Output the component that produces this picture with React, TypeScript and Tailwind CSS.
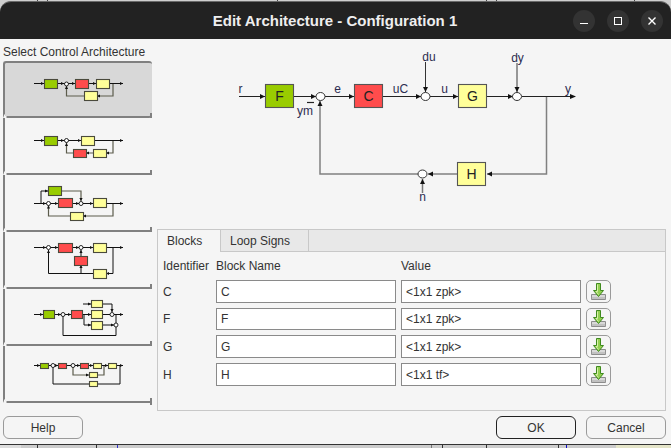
import React from "react";

const GREEN = "#99cc00";
const RED = "#ff4c4c";
const YEL = "#ffff99";

type B = [number, number, number, number, string];
type S = [number, number];
type L = string;

function Thumb({ top, blocks, sums, wires, gray, arrows }: { top: number; blocks: B[]; sums: S[]; wires: L[]; gray?: L[]; arrows: [number, number, "r" | "l" | "u" | "d"][] }) {
  return (
    <svg className="block" width="147" height="55" viewBox={`5 ${top} 147 55`}>
      {(gray ?? []).map((d, i) => (
        <path key={i} d={d} fill="none" stroke="#5c5c4c" strokeWidth="1.2" />
      ))}
      {wires.map((d, i) => (
        <path key={i} d={d} fill="none" stroke="#111" strokeWidth="1" />
      ))}
      {arrows.map(([x, y, dir], i) => {
        const p =
          dir === "r"
            ? `${x},${y} ${x - 3},${y - 1.6} ${x - 3},${y + 1.6}`
            : dir === "l"
              ? `${x},${y} ${x + 3},${y - 1.6} ${x + 3},${y + 1.6}`
              : dir === "u"
                ? `${x},${y} ${x - 1.6},${y + 3} ${x + 1.6},${y + 3}`
                : `${x},${y} ${x - 1.6},${y - 3} ${x + 1.6},${y - 3}`;
        return <polygon key={i} points={p} fill="#111" />;
      })}
      {blocks.map(([x, y, w, h, c], i) => (
        <rect key={i} x={x + 0.5} y={y + 0.5} width={w} height={h} fill={c} stroke="#4a4a3c" strokeWidth="1.1" />
      ))}
      {sums.map(([x, y], i) => (
        <circle key={i} cx={x} cy={y} r="2" fill="#fff" stroke="#111" strokeWidth="0.9" />
      ))}
    </svg>
  );
}

const thumbs = [
  {
    top: 63,
    blocks: [[44, 79, 13, 9, GREEN], [75, 79, 13, 9, RED], [96, 79, 13, 9, YEL], [84, 91, 13, 9, YEL]] as B[],
    sums: [[66.5, 84]] as S[],
    wires: ["M34 83.5H123"],
    gray: ["M113 84V96H66.5V84"],
    arrows: [[44, 83.5, "r"], [64, 83.5, "r"], [75, 83.5, "r"], [96, 83.5, "r"], [123, 83.5, "r"], [66.5, 86, "u"], [97, 96, "l"]] as any,
  },
  {
    top: 118,
    blocks: [[44, 136, 13, 9, GREEN], [81, 136, 13, 9, YEL], [93, 149, 13, 8, YEL], [73, 149, 13, 8, RED]] as B[],
    sums: [[66.5, 140.5]] as S[],
    wires: ["M34 140.5H123"],
    gray: ["M113 140.5V153H106M93 153H86M73 153H66.5V140.5"],
    arrows: [[44, 140.5, "r"], [64, 140.5, "r"], [81, 140.5, "r"], [123, 140.5, "r"], [66.5, 143, "u"], [106, 153, "l"], [86, 153, "l"]] as any,
  },
  {
    top: 175,
    blocks: [[48, 186, 13, 9, GREEN], [58, 198, 14, 9, RED], [93, 198, 13, 9, YEL], [70, 212, 13, 8, YEL]] as B[],
    sums: [[48.5, 203.5], [81, 203.5]] as S[],
    wires: ["M34 203.5H123", "M41 203.5V191H48"],
    gray: ["M61 191H81V201", "M113 203.5V216H83M70 216H48.5V205"],
    arrows: [[48, 191, "r"], [46, 203.5, "r"], [58, 203.5, "r"], [79, 203.5, "r"], [93, 203.5, "r"], [123, 203.5, "r"], [81, 201, "d"], [48.5, 205.5, "u"], [83, 216, "l"]] as any,
  },
  {
    top: 232,
    blocks: [[58, 243, 14, 9, RED], [93, 243, 13, 9, YEL], [74, 256, 13, 9, RED], [93, 269, 13, 9, YEL]] as B[],
    sums: [[48.5, 247.5], [81, 247.5]] as S[],
    wires: ["M34 247.5H123", "M113 247.5V273.5H106", "M93 273.5H48.5V250", "M81 250V256M81 265V273"],
    gray: [],
    arrows: [[46, 247.5, "r"], [58, 247.5, "r"], [79, 247.5, "r"], [93, 247.5, "r"], [123, 247.5, "r"], [81, 250, "u"], [48.5, 250, "u"], [106, 273.5, "l"], [81, 265, "u"]] as any,
  },
  {
    top: 289,
    blocks: [[43, 310, 11, 8, GREEN], [71, 310, 11, 8, RED], [91, 300, 11, 7, YEL], [91, 310, 11, 8, YEL], [91, 321, 11, 8, YEL]] as B[],
    sums: [[63, 314.5], [112, 314.5], [116, 325]] as S[],
    wires: ["M34 314.5H123", "M83 304H91M102 304H112V312", "M84 314V325H91M102 325H114", "M116 314V323", "M116 327V335.5H63V316"],
    gray: [],
    arrows: [[43, 314.5, "r"], [61, 314.5, "r"], [71, 314.5, "r"], [91, 304, "r"], [91, 314.5, "r"], [91, 325, "r"], [123, 314.5, "r"], [112, 312, "d"], [114, 325, "r"]] as any,
  },
  {
    top: 346,
    blocks: [[40, 363, 8, 5, GREEN], [58, 363, 8, 5, RED], [80, 363, 8, 5, RED], [93, 363, 8, 5, YEL], [108, 363, 8, 5, YEL], [89, 372, 8, 5, YEL], [89, 381, 8, 5, YEL]] as B[],
    sums: [[53, 365.5], [73, 365.5]] as S[],
    wires: ["M34 365.5H123", "M53 367V384H89M97 384H120V365.5"],
    gray: ["M73 367V375H89M97 375H104V365.5"],
    arrows: [[40, 365.5, "r"], [58, 365.5, "r"], [80, 365.5, "r"], [93, 365.5, "r"], [108, 365.5, "r"], [123, 365.5, "r"], [89, 375, "r"]] as any,
  },
];

function MainDiagram() {
  const Block = ({ x, y, c, t }: { x: number; y: number; c: string; t: string }) => (
    <>
      <rect x={x + 0.5} y={y + 0.5} width="28" height="23" fill={c} stroke="#555" strokeWidth="1.1" />
      <text x={x + 14.5} y={y + 17} textAnchor="middle" fontSize="14" fill="#222" fontFamily="Liberation Sans, sans-serif">{t}</text>
    </>
  );
  const Lbl = ({ x, y, t }: { x: number; y: number; t: string }) => (
    <text x={x} y={y} textAnchor="middle" fontSize="12" fill="#2c2c50" fontFamily="Liberation Sans, sans-serif">{t}</text>
  );
  const Arrow = ({ p }: { p: string }) => <polygon points={p} fill="#111" />;
  const Sum = ({ x, y }: { x: number; y: number }) => <ellipse cx={x} cy={y} rx="4.5" ry="4" fill="#fff" stroke="#333" strokeWidth="1" />;
  return (
    <svg width="510" height="175" viewBox="157 39 510 175" className="block">
      <path d="M239 96.5H265M294 96.5H316M325 96.5H354M383 96.5H421M430 96.5H458M487 96.5H513M522 96.5H573" stroke="#222" fill="none" />
      <path d="M425.5 62V92" stroke="#333" fill="none" />
      <path d="M517 63V92" stroke="#777" strokeWidth="1.5" fill="none" />
      <path d="M546.5 97V174H487M457 174H428M418 174H320V101" stroke="#808080" strokeWidth="1.5" fill="none" />
      <path d="M422.5 179V193" stroke="#777" strokeWidth="1.5" fill="none" />
      <Arrow p="265,96.5 260,94 260,99" />
      <Arrow p="316,96.5 311,94 311,99" />
      <Arrow p="354,96.5 349,94 349,99" />
      <Arrow p="421,96.5 416,94 416,99" />
      <Arrow p="458,96.5 453,94 453,99" />
      <Arrow p="513,96.5 508,94 508,99" />
      <Arrow p="576,96.5 570,94 570,99" />
      <Arrow p="425.5,92 423,87 428,87" />
      <Arrow p="517,92 514.5,87 519.5,87" />
      <Arrow p="320,101 317.5,106 322.5,106" />
      <Arrow p="487,174 492,171.5 492,176.5" />
      <Arrow p="428,174 433,171.5 433,176.5" />
      <Arrow p="422.5,179 420,184 425,184" />
      <Block x={265} y={84} c={GREEN} t="F" />
      <Block x={354} y={84} c={RED} t="C" />
      <Block x={458} y={84} c={YEL} t="G" />
      <Block x={457} y={162} c={YEL} t="H" />
      <Sum x={320.5} y={96.5} />
      <Sum x={425.5} y={96.5} />
      <Sum x={517} y={96.5} />
      <Sum x={422.5} y={174} />
      <path d="M307 102.5H314" stroke="#222" strokeWidth="1.2" />
      <Lbl x={240.5} y={93} t="r" />
      <Lbl x={337.5} y={93} t="e" />
      <Lbl x={400.5} y={93} t="uC" />
      <Lbl x={444.5} y={93} t="u" />
      <Lbl x={429} y={61} t="du" />
      <Lbl x={517.5} y={62} t="dy" />
      <Lbl x={568} y={93} t="y" />
      <Lbl x={305} y={115} t="ym" />
      <Lbl x={422.5} y={201} t="n" />
    </svg>
  );
}

function ImportIcon() {
  return (
    <svg width="17" height="18" viewBox="0 0 17 18">
      <path d="M1.5 11.5H15.5V16.5H1.5Z" fill="#d8d8d8" stroke="#8c8c8c" />
      <path d="M1.5 15H15.5" stroke="#aaa" />
      <path d="M6.5 0.5H10.5V7.5H13.5L8.5 13.5L3.5 7.5H6.5Z" fill="#92d050" stroke="#3f8a1e" />
      <path d="M7.5 1.5V8.5H6L8.5 11.5" fill="none" stroke="#d8f0a8" />
    </svg>
  );
}

const rows = [
  ["C", "<1x1 zpk>", "h-[23px]"],
  ["F", "<1x1 zpk>", "h-[22px]"],
  ["G", "<1x1 zpk>", "h-[23px]"],
  ["H", "<1x1 tf>", "h-[23px]"],
];

const topTicks = ["left-[37px]", "left-[47px]", "left-[277px]", "left-[486px]", "left-[496px]", "left-[634px]"];

export default function App() {
  return (
    <div className="relative flex h-[448px] w-[671px] flex-col overflow-hidden bg-[#cfcfcf] text-[12px] text-[#333] [font-family:'Liberation_Sans',sans-serif]">
      {topTicks.map((c) => (
        <div key={c} className={"absolute top-0 h-px w-px bg-[#444] " + c} />
      ))}
      <div className="mt-px flex h-[38px] shrink-0 items-center rounded-t-[11px] border-t border-[#6a6a6a] bg-[#222222] pl-[49px] pr-[8px]">
        <div className="flex-1 pl-[48px] pt-[2px] text-center text-[15px] font-bold text-[#eeeeee]">Edit Architecture - Configuration 1</div>
        <div className="flex items-center gap-[12px]">
          <div className="flex h-[22px] w-[22px] items-center justify-center rounded-full bg-[#333333]">
            <div className="mt-[6px] h-[1.5px] w-[8px] bg-white" />
          </div>
          <div className="flex h-[22px] w-[22px] items-center justify-center rounded-full bg-[#333333]">
            <div className="h-[8px] w-[8px] border border-white" />
          </div>
          <div className="flex h-[22px] w-[22px] items-center justify-center rounded-full bg-[#333333]">
            <svg width="10" height="10" viewBox="0 0 10 10"><path d="M1.5 1.5L8.5 8.5M8.5 1.5L1.5 8.5" stroke="#fff" strokeWidth="1.4" /></svg>
          </div>
        </div>
      </div>
      <div className="flex h-[405px] shrink-0 bg-[#f5f5f5]">
        <div className="flex w-[157px] shrink-0 flex-col pl-[3px]">
          <div className="mt-[5px] h-[17px] whitespace-nowrap text-[12px] leading-[17px] text-[#333]">Select Control Architecture</div>
          <div className="w-[149px]">
            {thumbs.map((t, i) => (
              <div
                key={i}
                className={
                  i === 0
                    ? "relative h-[57px] rounded-[3px] border-b-2 border-l-2 border-t-2 border-[#808080] bg-[#d8d8d8]"
                    : "relative h-[57px] rounded-bl-[3px] border-b-2 border-l-2 border-[#808080] bg-[#f5f5f5]"
                }
              >
                <Thumb {...t} />
                <div className="absolute bottom-[-4px] left-[-1px] h-[6px] w-[3px] bg-[#f5f5f5] [clip-path:polygon(0_0,100%_50%,0_100%)]" />
                <div className="absolute bottom-[-4px] right-0 h-[7px] w-[2px] bg-[#808080]" />
              </div>
            ))}
          </div>
          <button className="mt-[13px] h-[23px] w-[80px] rounded-[6px] border border-[#9a9a9a] bg-[#f5f5f5] text-[12px] text-[#333]">Help</button>
        </div>
        <div className="flex min-w-0 flex-1 flex-col">
          <div className="h-[190px] shrink-0 overflow-hidden">
            <MainDiagram />
          </div>
          <div className="h-[182px] w-[509px] shrink-0 border border-[#c8c8c8]">
            <div className="flex h-[22px] border-b border-[#c8c8c8] bg-[#e8e8e8]">
              <div className="flex h-[22px] w-[63px] items-center border-r border-[#c8c8c8] bg-[#f5f5f5] pl-[9px] text-[12px]">Blocks</div>
              <div className="flex h-[21px] w-[88px] items-center border-r border-[#c8c8c8] pl-[9px] text-[12px]">Loop Signs</div>
            </div>
            <div className="grid grid-cols-[53px_185px_185px_25px] pl-[5px] pt-[7px]">
              <div className="h-[21px] leading-[15px]">Identifier</div>
              <div className="h-[21px] leading-[15px]">Block Name</div>
              <div className="h-[21px] leading-[15px]">Value</div>
              <div />
              {rows.map(([id, val, h]) => (
                <React.Fragment key={id}>
                  <div className={"mb-[5px] flex items-center " + h}>{id}</div>
                  <div className={"mb-[5px] pr-[5px] " + h}>
                    <div className="flex h-full w-[180px] items-center border border-[#8a8a8a] bg-white pl-[4px]">{id}</div>
                  </div>
                  <div className={"mb-[5px] pr-[5px] " + h}>
                    <div className="flex h-full w-[180px] items-center border border-[#8a8a8a] bg-white pl-[4px]">{val}</div>
                  </div>
                  <div className={"mb-[5px] flex w-[25px] items-center justify-center rounded-[5px] border border-[#9a9a9a] bg-[#f5f5f5] " + h}>
                    <ImportIcon />
                  </div>
                </React.Fragment>
              ))}
            </div>
          </div>
          <div className="mt-[5px] flex w-[509px] justify-end gap-[10px]">
            <button className="h-[23px] w-[80px] rounded-[6px] border border-[#222] bg-[#f5f5f5] text-[12px] text-[#333]">OK</button>
            <button className="h-[23px] w-[80px] rounded-[6px] border border-[#9a9a9a] bg-[#f5f5f5] text-[12px] text-[#333]">Cancel</button>
          </div>
        </div>
      </div>
      <div className="relative flex-1 border-t border-[#333] bg-[#cccccc]">
        <div className="absolute left-0 top-0 h-full w-[21px] bg-[#dddddd]" />
        <div className="absolute left-[37px] top-0 h-full w-px bg-[#333]" />
        <div className="absolute left-[96px] top-0 h-full w-px bg-[#333]" />
        <div className="absolute left-[117px] top-0 h-full w-px bg-[#3333cc]" />
        <div className="absolute left-[431px] top-0 h-full w-px bg-[#777]" />
        <div className="absolute left-[442px] top-0 h-full w-px bg-[#333]" />
        <div className="absolute left-[486px] top-0 h-full w-px bg-[#333]" />
        <div className="absolute left-[558px] top-0 h-full w-px bg-[#333]" />
        <div className="absolute left-[566px] top-0 h-full w-px bg-[#1111cc]" />
        <div className="absolute left-[616px] top-0 h-full w-[55px] bg-[#e4e4c8]" />
      </div>
    </div>
  );
}
